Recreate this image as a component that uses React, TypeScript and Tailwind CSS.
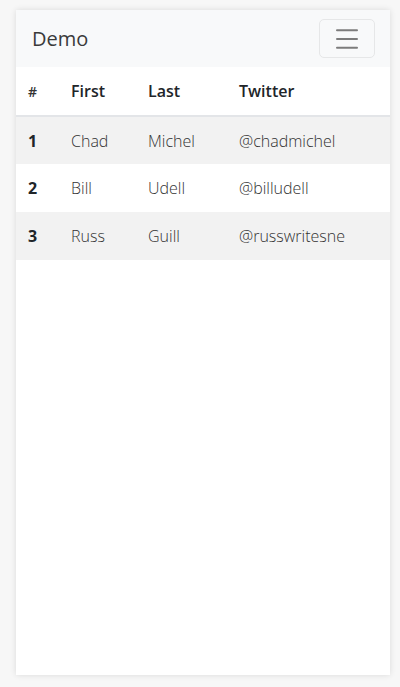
import { Menu } from 'lucide-react';

const rows = [
  { id: 1, first: 'Chad', last: 'Michel', twitter: '@chadmichel' },
  { id: 2, first: 'Bill', last: 'Udell', twitter: '@billudell' },
  { id: 3, first: 'Russ', last: 'Guill', twitter: '@russwritesne' },
];

function App() {
  return (
    <div
      className="h-[687px] w-[400px] bg-[#f7f7f7] pt-[10px] pl-[16px]"
      style={{ fontFamily: '"Segoe UI", "Open Sans", "Noto Sans", sans-serif' }}
    >
      <div className="flex h-[665px] w-[374px] flex-col bg-white shadow-[0_0_6px_rgba(0,0,0,0.12)]">
        <nav className="flex h-[57px] items-center justify-between bg-[#f8f9fa] pl-[16px] pr-[15px]">
          <span className="text-[20px] text-[#3a3a3a]">Demo</span>
          <button className="flex h-[39px] w-[56px] items-center justify-center rounded-[5px] border border-[#e6e7e8]">
            <Menu className="h-[30px] w-[30px] text-[#7c7c7c]" strokeWidth={1.6} />
          </button>
        </nav>
        <table className="w-full border-collapse text-[16px] text-[#212529]">
          <thead>
            <tr className="h-[49px] border-b-2 border-[#e3e5e8]">
              <th className="w-[41px] pl-[12px] text-left text-[14px] font-semibold text-[#333]">#</th>
              <th className="w-[78px] pl-[14px] text-left font-semibold">First</th>
              <th className="w-[90px] pl-[13px] text-left font-semibold">Last</th>
              <th className="pl-[14px] text-left font-semibold">Twitter</th>
            </tr>
          </thead>
          <tbody>
            {rows.map((r, i) => (
              <tr
                key={r.id}
                className={`h-[48px] ${i % 2 === 0 ? 'bg-[#f2f2f2]' : 'bg-white'}`}
              >
                <td className="pl-[12px] font-bold">{r.id}</td>
                <td className="pl-[14px] font-light text-[#333]">{r.first}</td>
                <td className="pl-[13px] font-light text-[#333]">{r.last}</td>
                <td className="pl-[14px] font-light text-[#333]">{r.twitter}</td>
              </tr>
            ))}
          </tbody>
        </table>
      </div>
    </div>
  );
}

export default App;
